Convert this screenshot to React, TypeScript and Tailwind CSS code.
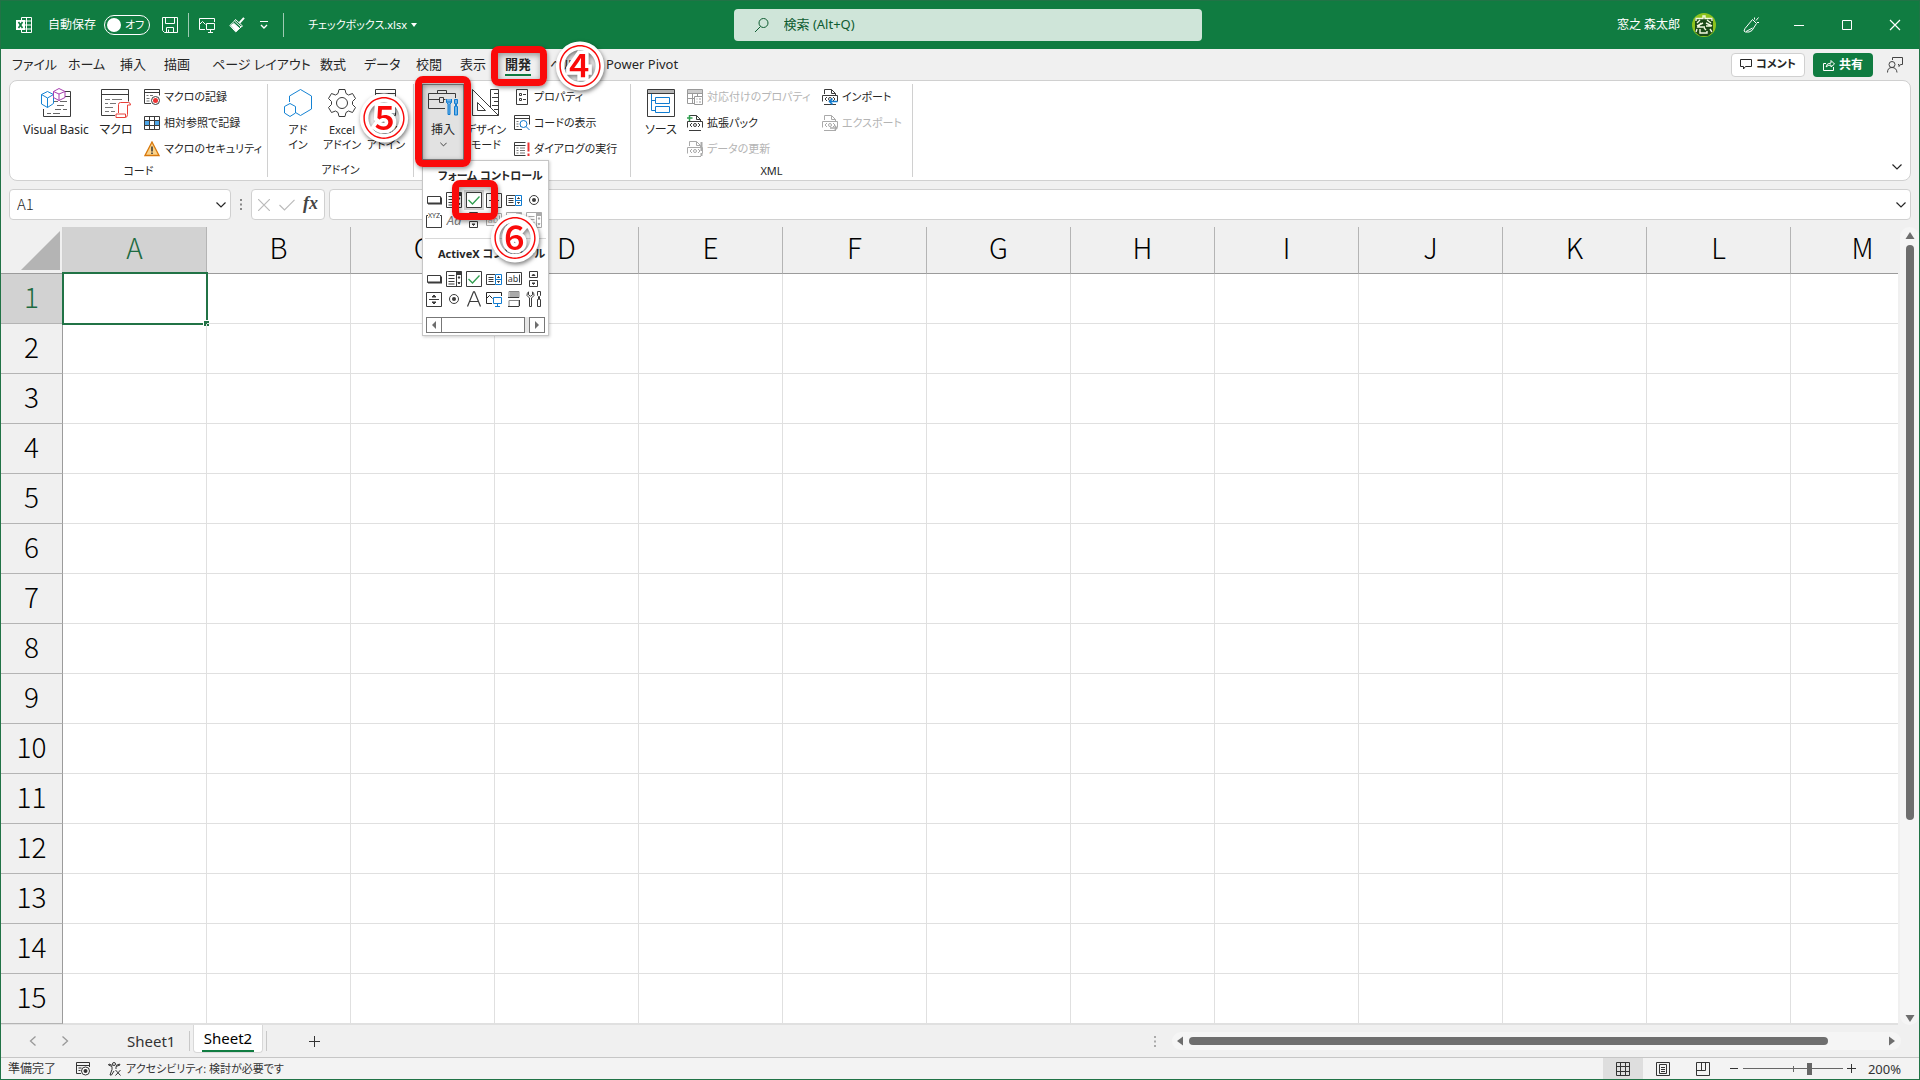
import type { ReactNode } from 'react';

const COLUMNS = ['A', 'B', 'C', 'D', 'E', 'F', 'G', 'H', 'I', 'J', 'K', 'L', 'M'];
const ROWS = Array.from({ length: 15 }, (_, i) => i + 1);

const DARK = '#3b3b3b';
const BLUE = '#0f7bd0';

interface SvgProps {
  w?: number;
  h?: number;
  color?: string;
  children: ReactNode;
}

function Svg({ w = 16, h = 16, color = 'currentColor', children }: SvgProps) {
  return (
    <svg width={w} height={h} viewBox={`0 0 ${w} ${h}`} fill="none" stroke={color} strokeWidth="1" className="shrink-0" aria-hidden="true">
      {children}
    </svg>
  );
}

/* ---------- title bar icons ---------- */

const ExcelIcon = () => (
  <Svg>
    <path d="M5.5 3V.5h10v15h-10V13M5.5 4h10M5.5 8h10M5.5 12h10M10.5.5v15" />
    <rect x="0" y="3" width="9" height="10" fill="#fff" stroke="none" />
    <path d="M2.5 5l4 6M6.5 5l-4 6" stroke="#107c41" strokeWidth="1.6" />
  </Svg>
);

const SaveIcon = () => (
  <Svg>
    <path d="M.5.5h15v15h-13l-2-2zM3.5.5v6h9v-6M4.5 15.5v-5h7v5M6.5 12.5v3" />
  </Svg>
);

const PictureIcon = ({ screen = 'currentColor' }: { screen?: string }) => (
  <Svg>
    <path d="M6 12.500H.5v-11h15V5M.5 7.500L3.500 4.500l3 3" />
    <path d="M7.500 6.500h8v6h-8zM11.500 12.500v3M9 15.500h5" stroke={screen} />
  </Svg>
);

const BrushIcon = () => (
  <Svg>
    <path d="M15 .8l-4.500 5" strokeWidth="2" />
    <path d="M6.500 2.500l7 6.500-1.500 1L5.500 4zM5.500 4L.8 8.500l6 6.500 5.200-5" />
    <path d="M2 8.500l5 5.500 3-3-5-4.500z" fill="currentColor" />
  </Svg>
);

const PenIcon = () => (
  <Svg>
    <path d="M9.500 2.500l4 4-4.500 7-3 1.500H2.500L1 14l1-2.500zM3 14.500L9.500 11M11.500 2.500V.5M13 3.500l2.500-3M14 5.500h2" />
  </Svg>
);

/* ---------- ribbon icons ---------- */

const VisualBasicIcon = () => (
  <Svg w={30} h={30} color={DARK}>
    <path d="M24 3.500h5.500v25h-27V21M24 8.500h5" />
    <path d="M13 13.500h4M19 13.500h7M16 17.500h7M14 21.500h6M22 21.500h4M6 25.500h4M12 25.500h7" stroke="#666" />
    <path d="M.5 6.500L6.500 3.500l6 3v9l-6 4-6-3.500zM.5 6.500l6 3.500 6-3.500M6.500 10v9.500" stroke="#1583d4" fill="#fff" />
    <path d="M12.500 3.500l5.500-3 6 3v6L18 12.500l-5.500-3zM12.500 3.500L18 6l6-2.500M18 6v6.500" stroke="#a83fb0" fill="#fff" />
  </Svg>
);

const MacroIcon = () => (
  <Svg w={30} h={30} color={DARK}>
    <path d="M14 27.500H.5v-26h27v12M.5 6.500h27" />
    <path d="M4 11.500h5M11 11.500h10M4 15.500h3M9 15.500h6M4 19.500h8M4 23.500h4M10 23.500h4" stroke="#777" />
    <path d="M17.500 25V16.500q0-2 2-2h8q2 0 2 2.500h-3v9.500q0 3-2.500 3h-9v-3.500h9.500v3" stroke="#e8413a" fill="#fff" />
  </Svg>
);

const RecordIcon = () => (
  <Svg color={DARK}>
    <path d="M7 14.500H.5v-14h15v6M.5 3.500h15" />
    <path d="M2.500 6.500h2M6 6.500h3M2.500 9.500h3M2.500 12h3" stroke="#777" />
    <circle cx="11.500" cy="11.500" r="4" fill="#fff" />
    <circle cx="11.500" cy="11.500" r="2.500" fill="#e33" stroke="none" />
  </Svg>
);

const RelativeIcon = () => (
  <Svg color={DARK}>
    <rect x="1" y="5" width="14" height="5" fill="#4da6e8" stroke="none" />
    <rect x="6" y="5" width="4" height="5" fill="#fff" stroke="none" />
    <path d="M.5 1.500h15v13H.5zM.5 5.500h15M.5 10.500h15M5.500 1.500v13M10.500 1.500v13" />
  </Svg>
);

const WarningIcon = () => (
  <Svg>
    <path d="M8 1l7 13.500H1z" fill="#fbd38a" stroke="#d8780c" strokeWidth="1.300" />
    <path d="M8 5.500v5M8 11.500v1.500" stroke="#333" strokeWidth="1.500" />
  </Svg>
);

const AddInIcon = () => (
  <Svg w={30} h={30} color="#1583d4">
    <path d="M17.500 1.500l11 6.500v13l-11 6.500-5-3V20M6.500 14V8l11-6.500" />
    <path d="M7 15.500l5.500 3v6.500L7 28.500l-5.500-3.500v-6.500z" />
  </Svg>
);

const GearIcon = () => (
  <Svg w={30} h={30} color={DARK}>
    <path d="M11 5.500l1-4h6l1 4 2.500 1.500 4-1.500 3 5-3 3v3l3 3-3 5-4-1.500-2.500 1.500-1 4h-6l-1-4-2.500-1.500-4 1.500-3-5 3-3v-3l-3-3 3-5 4 1.500z" />
    <circle cx="15" cy="15" r="5.500" />
  </Svg>
);

const ComIcon = () => (
  <Svg w={30} h={30} color={DARK}>
    <path d="M4.500 27.500v-26h20v26zM4.500 5.500h20M8.500 8.500h3v3h-3zM14 10.500h7M8.500 15.500h3v3h-3zM14 17.500h5" />
    <circle cx="20" cy="22" r="5" fill="#9db8c8" stroke="none" />
  </Svg>
);

const ToolboxIcon = () => (
  <Svg w={30} h={30} color={DARK}>
    <path d="M17 20.500H.5v-15h27V10M9.500 5.500v-3h9v3M.5 11.500h11M11.500 9.500h4v5h-4zM15.500 11.500h2" />
    <path d="M18.500 11v3.500l1.500 1.500v10.500h2V16l1.500-1.500V11M18.500 11v3h5v-3" stroke={BLUE} fill="#6db3e8" />
    <path d="M26.500 11.500h3v4h-1v3h1v8.500h-3v-8.500h1v-3h-1z" stroke={BLUE} fill="#6db3e8" />
  </Svg>
);

const DesignIcon = () => (
  <Svg w={30} h={30} color={DARK}>
    <path d="M1.500 1.500v26h26zM6.500 14.500v8h8z" />
    <path d="M19.500 19V1.500h8v26M23 5.500h4M21 9.500h6M23 13.500h4M21 17.500h6M23 21.500h4" />
  </Svg>
);

const PropertyIcon = () => (
  <Svg color={DARK}>
    <path d="M2.500.5h11v15h-11zM5.500 4.500h2v2h-2zM5.500 9.500h2v2h-2zM9 5.500h3M9 10.500h3" />
  </Svg>
);

const ViewCodeIcon = () => (
  <Svg color={DARK}>
    <path d="M8 14.500H.5v-14h15v9M.5 3.500h15" />
    <path d="M2.500 6.500h2M2.500 9h2M2.500 11.500h2M6 11.500h1" stroke="#777" />
    <circle cx="9.500" cy="9" r="3.500" stroke={BLUE} fill="#fff" />
    <path d="M12 11.500l3.500 3.500" stroke={BLUE} />
  </Svg>
);

const RunDialogIcon = () => (
  <Svg color={DARK}>
    <path d="M11.500 14.500H.5v-13h11M.5 4.500h11" />
    <path d="M2.500 7h2M6 7h5M2.500 9.500h2M6 9.500h5M2.500 12h2M6 12h5" stroke="#777" />
    <path d="M14.500 1.500v9M14.500 12.500v2.500" stroke="#e33" strokeWidth="2" />
  </Svg>
);

const SourceIcon = () => (
  <Svg w={30} h={30} color={DARK}>
    <rect x="1" y="2" width="27" height="4" fill="#b5b5b5" stroke="none" />
    <path d="M1.500 1.500h27v27h-27zM1.500 5.500h27" />
    <path d="M5.500 6v16.500h4M5.500 12.500h4M9.500 9.500h14v6h-14zM9.500 18.500h14v6h-14z" stroke={BLUE} />
  </Svg>
);

const MapPropertyIcon = () => (
  <Svg color="#999">
    <rect x="0" y="1" width="15" height="3" fill="#ccc" stroke="none" />
    <path d="M7 14.500H.5V.5h15v7M.5 4.500h15M.5 9.500H7M5.500 4.500v10M10.500 4.500V7" />
    <path d="M7.500 7.500h8v8h-8zM9.500 10h1M12 10h2M9.500 13h1M12 13h2" />
  </Svg>
);

interface XmlFileIconProps {
  color?: string;
  children?: ReactNode;
}

/* page with a <o> mark, the corner mark differs per command */
const XmlFileIcon = ({ color = DARK, children }: XmlFileIconProps) => (
  <Svg color={color}>
    <path d="M2.500 5V.5h7l4 4V6M9.500.5v4h4M2 15.500h12M.5 12.500v-6h15v6" />
    <path d="M5 8l-2 2 2 2M11 8l2 2-2 2" />
    <circle cx="8" cy="10" r="1.500" />
    {children}
  </Svg>
);

/* ---------- small form control icons ---------- */

const ButtonGlyph = () => (
  <Svg color={DARK}>
    <path d="M1.500 4.500h13v7h-13z" />
    <path d="M2 11.500h13v-6" strokeWidth="2" />
  </Svg>
);

const ComboGlyph = ({ color = DARK }: { color?: string }) => (
  <Svg color={color}>
    <path d="M.5.5h15v15H.5zM10.500.5v15M10.500 3.500h5M2.500 4.500h6M2.500 7.500h6M2.500 10.500h6M2.500 13h6" />
    <path d="M10.500 1h5v2.500h-5z" fill={color} />
    <path d="M12 7l1-1.500L14 7zM12 11.500l1 1.500 1-1.500z" fill={color} />
  </Svg>
);

const CheckGlyph = () => (
  <Svg color={DARK}>
    <path d="M.5.5h15v15H.5z" fill="#fff" />
    <path d="M2.500 8l4 4 7-7.500" stroke="#2f9e4f" strokeWidth="1.300" />
  </Svg>
);

const SpinGlyph = () => (
  <Svg color={DARK}>
    <path d="M.5 1.500h15v14H.5zM3 8.500h10" />
    <path d="M6 6l2-2 2 2zM6 11l2 2 2-2z" fill={DARK} />
  </Svg>
);

const ListGlyph = () => (
  <Svg color={DARK}>
    <path d="M9 13.500H.5v-10H9M2.500 6.500h5M2.500 8.500h5M2.500 10.500h5" />
    <path d="M9.500 3.500h6v10h-6zM9.500 8.500h6" stroke={BLUE} />
    <path d="M11.500 6.500l1-1 1 1zM11.500 10.500l1 1 1-1z" fill={DARK} />
  </Svg>
);

const RadioGlyph = () => (
  <Svg color={DARK}>
    <circle cx="8" cy="8" r="4.500" />
    <circle cx="8" cy="8" r="2" fill={DARK} stroke="none" />
  </Svg>
);

const GroupGlyph = () => (
  <Svg color={DARK}>
    <path d="M2 3.500H.5v12h15v-12H14" />
    <text x="8" y="6" fontSize="7" textAnchor="middle" fill={DARK} stroke="none">XYZ</text>
  </Svg>
);

const LabelGlyph = () => (
  <Svg color="#777">
    <text x="8" y="13" fontSize="13" fontStyle="italic" textAnchor="middle" fill="#777" stroke="none">Aa</text>
  </Svg>
);

const ScrollGlyph = () => (
  <Svg color={DARK}>
    <path d="M3.500.5h8v6h-8zM3.500 9.500h8v6h-8z" />
    <path d="M6 4.500L7.500 3 9 4.500zM6 12l1.500 1.500L9 12z" fill={DARK} />
  </Svg>
);

const TextGlyph = ({ color = DARK }: { color?: string }) => (
  <Svg color={color}>
    <path d="M.5 1.500h15v12H.5zM13.500 3.500v8" />
    <text x="7" y="11" fontSize="9" textAnchor="middle" fill={color} stroke="none">ab</text>
  </Svg>
);

const BigLabelGlyph = () => (
  <Svg color={DARK}>
    <path d="M1.500 15.500L7.500.8h1l6 14.700M3.500 10.500h9" strokeWidth="1.200" />
  </Svg>
);

const ToggleGlyph = () => (
  <Svg color={DARK}>
    <path d="M3 .5h10v6H3zM3 9.500h10v6H3z" stroke="#888" />
    <path d="M4 1h9v5H4z" fill="#aaa" stroke="none" />
    <path d="M2 6.500h11M2 15.500h11M13.500 9v6" />
  </Svg>
);

const ToolsGlyph = () => (
  <Svg color={DARK}>
    <path d="M2.500.8v3l2 1.500 2-1.500v-3M2.500.8Q.8 2.500 1 4.500L3.500 7v8.500h2V7L8 4.500Q8 2 6.500.8" />
    <path d="M11.500.5h3v4l-1 1v3h1v7h-3v-7h1v-3l-1-1z" />
  </Svg>
);

const FORM_CONTROLS = [
  { name: 'ボタン', icon: <ButtonGlyph /> },
  { name: 'コンボ ボックス', icon: <ComboGlyph /> },
  { name: 'チェック ボックス', icon: <CheckGlyph />, marked: true },
  { name: 'スピン ボタン', icon: <SpinGlyph /> },
  { name: 'リスト ボックス', icon: <ListGlyph /> },
  { name: 'オプション ボタン', icon: <RadioGlyph /> },
  { name: 'グループ ボックス', icon: <GroupGlyph /> },
  { name: 'ラベル', icon: <LabelGlyph /> },
  { name: 'スクロール バー', icon: <ScrollGlyph /> },
  { name: 'テキスト フィールド', icon: <TextGlyph color="#aaa" /> },
  { name: 'コンボ リスト', icon: <ComboGlyph color="#aaa" /> },
  { name: 'コンボ ドロップダウン', icon: <ComboGlyph color="#aaa" /> },
];

const ACTIVEX_CONTROLS = [
  { name: 'コマンド ボタン', icon: <ButtonGlyph /> },
  { name: 'コンボ ボックス', icon: <ComboGlyph /> },
  { name: 'チェック ボックス', icon: <CheckGlyph /> },
  { name: 'リスト ボックス', icon: <ListGlyph /> },
  { name: 'テキスト ボックス', icon: <TextGlyph /> },
  { name: 'スクロール バー', icon: <ScrollGlyph /> },
  { name: 'スピン ボタン', icon: <SpinGlyph /> },
  { name: 'オプション ボタン', icon: <RadioGlyph /> },
  { name: 'ラベル', icon: <BigLabelGlyph /> },
  { name: 'イメージ', icon: <PictureIcon screen={BLUE} /> },
  { name: 'トグル ボタン', icon: <ToggleGlyph /> },
  { name: 'コントロールの選択', icon: <ToolsGlyph /> },
];

const TABS = [
  { label: 'ファイル', width: 'w-14' },
  { label: 'ホーム', width: 'w-13' },
  { label: '挿入', width: 'w-11' },
  { label: '描画', width: 'w-12' },
  { label: 'ページ レイアウト', width: 'w-27' },
  { label: '数式', width: 'w-11' },
  { label: 'データ', width: 'w-13' },
  { label: '校閲', width: 'w-11' },
  { label: '表示', width: 'w-[45px]' },
  { label: '開発', width: 'w-[45px]', active: true },
  { label: 'ヘルプ', width: 'w-14' },
  { label: 'Power Pivot', width: 'w-20' },
];

function Chevron({ w = 10 }: { w?: number }) {
  return (
    <svg width={w} height={w} viewBox="0 0 10 10" fill="none" stroke="currentColor" strokeWidth="1.200" className="shrink-0" aria-hidden="true">
      <path d="M.5 2.500L5 7l4.500-4.500" />
    </svg>
  );
}

function Triangle({ d }: { d: string }) {
  return (
    <svg width="10" height="10" viewBox="0 0 10 10" fill="#6e6e6e" className="shrink-0" aria-hidden="true">
      <path d={d} />
    </svg>
  );
}

function StepNumber({ children, place }: { children: string; place: string }) {
  return (
    <span
      className={`pointer-events-none absolute z-30 font-['Noto_Sans_CJK_JP',sans-serif] text-[44px] leading-[44px] font-medium text-[#fa0a0a] [-webkit-text-stroke:7px_white] [paint-order:stroke_fill] drop-shadow-[1px_2px_2px_rgba(0,0,0,0.5)] ${place}`}
    >
      {children}
    </span>
  );
}

function RedFrame({ place }: { place: string }) {
  return (
    <span
      className={`pointer-events-none absolute z-20 rounded-lg border-[7px] border-[#fa0a0a] shadow-[1px_2px_4px_rgba(0,0,0,0.4),inset_1px_2px_6px_rgba(0,0,0,0.4)] ${place}`}
    />
  );
}

interface BigButtonProps {
  icon: ReactNode;
  lines: string[];
  width?: string;
  size?: string;
}

function BigButton({ icon, lines, width = 'w-11', size = 'text-xs' }: BigButtonProps) {
  return (
    <button className="flex h-19 shrink-0 flex-col items-center gap-1 pt-1 whitespace-nowrap">
      {icon}
      <span className={`flex flex-col items-center ${width} ${size}`}>
        {lines.map((line) => (
          <span key={line} className="leading-[15px]">{line}</span>
        ))}
      </span>
    </button>
  );
}

function SmallButton({ icon, label, disabled }: { icon: ReactNode; label: string; disabled?: boolean }) {
  return (
    <button disabled={disabled} className="flex h-[26px] items-center gap-1 text-left text-[11px] leading-4 whitespace-nowrap disabled:text-[#b4b4b4]">
      {icon}
      {label}
    </button>
  );
}

function Group({ label, width, children }: { label: string; width: string; children: ReactNode }) {
  return (
    <section className={`my-[3px] flex shrink-0 flex-col border-r border-[#d0d0d0] ${width}`}>
      <div className="flex h-[78px] pl-2">{children}</div>
      <h2 className="mt-0.5 text-center text-[11px] leading-[14px]">{label}</h2>
    </section>
  );
}

function TitleBar() {
  return (
    <header className="flex h-12 shrink-0 items-center bg-[#107c41] text-xs text-white">
      <div className="flex flex-1 items-center pl-[15px] whitespace-nowrap">
        <ExcelIcon />
        <label className="ml-4 flex items-center gap-2">
          自動保存
          <input type="checkbox" className="peer sr-only" />
          <span className="flex h-5 w-[46px] items-center gap-1 rounded-full border border-white pl-0.5 text-[11px]">
            <span className="size-[14px] rounded-full bg-white" />
            オフ
          </span>
        </label>
        <button aria-label="上書き保存" className="ml-3"><SaveIcon /></button>
        <span className="ml-[10px] h-6 w-px bg-white/60" />
        <button aria-label="画面" className="ml-[10px]"><PictureIcon /></button>
        <button aria-label="書式のコピー" className="ml-[14px]"><BrushIcon /></button>
        <button aria-label="クイック アクセス ツール バーのカスタマイズ" className="ml-[14px]">
          <Svg w={10} h={10}>
            <path d="M1 1.500h8" />
            <path d="M2 5l3 3 3-3" strokeWidth="1.400" />
          </Svg>
        </button>
        <span className="ml-[14px] h-6 w-px bg-white/60" />
        <button className="ml-6 flex items-center gap-1 text-[11px]">
          チェックボックス.xlsx
          <svg width="6" height="4" viewBox="0 0 6 4" fill="#fff" aria-hidden="true"><path d="M0 0h6L3 4z" /></svg>
        </button>
      </div>
      <label className="ml-4 flex h-8 w-[468px] shrink items-center gap-3.5 rounded bg-[#cfe5d9] px-5 text-[#0e5c31]">
        <Svg w={16} h={16}>
          <circle cx="9.500" cy="6" r="4.500" />
          <path d="M6.500 9.500L1 15" />
        </Svg>
        <input aria-label="検索" placeholder="検索 (Alt+Q)" className="w-full bg-transparent text-[13px] outline-none placeholder:text-[#0e5c31]" />
      </label>
      <div className="flex flex-1 items-center justify-end pr-4 whitespace-nowrap">
        <span>窓之 森太郎</span>
        <svg width="24" height="24" viewBox="0 0 24 24" className="ml-3" aria-hidden="true">
          <circle cx="12" cy="12" r="12" fill="#8cc21c" />
          <path d="M3 5h18v14l-5 4H8l-5-4z" fill="#1d4a18" />
          <path d="M4 8V5.500h7V3h2v2.500h7V8M8 7l-3 3M15 7l4 3M5 13l6-3M9 10l-3 4h7M14 10l6 3M14 13h5M5 16l-1 3M8 16v4h7v-2M12 15l2 2M18 16l2 3" fill="none" stroke="#f3f9e0" strokeWidth="1.400" />
        </svg>
        <button aria-label="ペン" className="ml-[27px]"><PenIcon /></button>
        <button aria-label="最小化" className="ml-8"><Svg><path d="M3 8.500h10" /></Svg></button>
        <button aria-label="最大化" className="ml-8"><Svg><path d="M3.500 3.500h9v9h-9z" /></Svg></button>
        <button aria-label="閉じる" className="ml-8"><Svg><path d="M3 3l10 10M13 3L3 13" strokeWidth="1.200" /></Svg></button>
      </div>
    </header>
  );
}

function TabRow() {
  return (
    <nav className="flex h-[31px] shrink-0 items-center justify-between pr-4 pl-[11px] text-[13px] leading-5">
      <div className="flex pt-px" role="tablist">
        {TABS.map((tab) => (
          <div key={tab.label} className={`relative shrink-0 whitespace-nowrap ${tab.width}`}>
            <button
              role="tab"
              aria-selected={!!tab.active}
              className={tab.active ? 'border-b-2 border-[#107c41] font-bold' : 'border-b-2 border-transparent'}
            >
              {tab.label}
            </button>
            {tab.active && <RedFrame place="-left-3.5 -top-2 h-10 w-14" />}
            {tab.active && <StepNumber place="left-[53px] -top-3">④</StepNumber>}
          </div>
        ))}
      </div>
      <div className="flex items-center gap-2 text-xs font-bold">
        <button className="flex h-6 w-[74px] items-center justify-center gap-1 rounded border border-[#d0d0d0] bg-white text-[11px] whitespace-nowrap">
          <Svg w={12} h={12}><path d="M.5.5h11v7h-6L3.500 10V7.500h-3z" /></Svg>
          コメント
        </button>
        <button className="flex h-6 w-[60px] items-center justify-center gap-1 rounded bg-[#107c41] whitespace-nowrap text-white">
          <Svg w={12} h={12}><path d="M3 4.500H.5v7h10V8M3 8q.5-4 5-4V1.500l3.500 3.500L8 8V6Q5 6 3 8z" /></Svg>
          共有
        </button>
        <button aria-label="アカウント" className="ml-1.5 text-[#444]">
          <Svg>
            <path d="M5.500.5h10v7h-2l-1.500 2v-2h-1M5.500.5V3" />
            <circle cx="5" cy="7.500" r="3" />
            <path d="M.5 15.500q0-5 4.500-5t5 5" />
          </Svg>
        </button>
      </div>
    </nav>
  );
}

interface Control {
  name: string;
  icon: ReactNode;
  marked?: boolean;
}

function ControlGrid({ items }: { items: Control[] }) {
  return (
    <div className="grid auto-rows-[20px] grid-cols-[repeat(6,20px)] px-px">
      {items.map((item) => (
        <button
          key={item.name}
          aria-label={item.name}
          className={`relative flex items-center justify-center ${item.marked ? 'bg-[#d4d4d4]' : ''}`}
        >
          {item.icon}
          {item.marked && <RedFrame place="-left-3 -top-2.5 h-10 w-[46px]" />}
          {item.marked && <StepNumber place="left-[29px] top-[24px]">⑥</StepNumber>}
        </button>
      ))}
    </div>
  );
}

function InsertMenu() {
  return (
    <div className="absolute top-19 left-0 z-10 w-[127px] border border-[#c6c6c6] bg-white pb-0.5 shadow-[1px_1px_3px_rgba(0,0,0,0.2)]">
      <h3 className="pl-[15px] text-[11px] leading-[29px] font-bold whitespace-nowrap">フォーム コントロール</h3>
      <ControlGrid items={FORM_CONTROLS} />
      <hr className="mx-0.5 mt-2 border-[#d8d8d8]" />
      <h3 className="pl-[15px] text-[11px] leading-[30px] font-bold whitespace-nowrap">ActiveX コントロール</h3>
      <ControlGrid items={ACTIVEX_CONTROLS} />
      <div className="mx-[3px] mt-2 flex h-4 bg-[#e6e6e6]">
        <button aria-label="左へ" className="flex w-4 items-center justify-center border border-[#777] bg-white"><Triangle d="M7 1v8L3 5z" /></button>
        <span className="-ml-px w-[84px] border border-[#777] bg-white" />
        <button aria-label="右へ" className="ml-auto flex w-4 items-center justify-center border border-[#777] bg-white"><Triangle d="M3 1v8l4-4z" /></button>
      </div>
    </div>
  );
}

function Ribbon() {
  return (
    <div className="relative mx-2 flex h-[101px] shrink-0 rounded-lg border border-[#d0d0d0] bg-white">
      <Group label="コード" width="w-[258px]">
        <BigButton icon={<VisualBasicIcon />} lines={['Visual Basic']} width="w-19" />
        <BigButton icon={<MacroIcon />} lines={['マクロ']} />
        <div className="ml-1.5">
          <SmallButton icon={<RecordIcon />} label="マクロの記録" />
          <SmallButton icon={<RelativeIcon />} label="相対参照で記録" />
          <SmallButton icon={<WarningIcon />} label="マクロのセキュリティ" />
        </div>
      </Group>
      <Group label="アドイン" width="w-[146px]">
        <BigButton icon={<AddInIcon />} lines={['アド', 'イン']} size="text-[11px]" />
        <BigButton icon={<GearIcon />} lines={['Excel', 'アドイン']} size="text-[11px]" />
        <div className="relative">
          <BigButton icon={<ComIcon />} lines={['COM', 'アドイン']} size="text-[11px]" />
          <StepNumber place="-left-0.5 top-2.5">⑤</StepNumber>
        </div>
      </Group>
      <Group label="" width="w-[217px]">
        <div className="relative">
          <button className="flex h-19 w-[42px] flex-col items-center gap-1 border border-[#8a8a8a] bg-[#e2e2e2] pt-[3px] text-xs leading-[15px]">
            <ToolboxIcon />
            挿入
            <Chevron w={7} />
          </button>
          <RedFrame place="-left-[7px] -top-2 h-[91px] w-14" />
          <InsertMenu />
        </div>
        <BigButton icon={<DesignIcon />} lines={['デザイン', 'モード']} size="text-[11px]" />
        <div className="ml-1.5">
          <SmallButton icon={<PropertyIcon />} label="プロパティ" />
          <SmallButton icon={<ViewCodeIcon />} label="コードの表示" />
          <SmallButton icon={<RunDialogIcon />} label="ダイアログの実行" />
        </div>
      </Group>
      <Group label="XML" width="w-[282px]">
        <BigButton icon={<SourceIcon />} lines={['ソース']} />
        <div className="ml-1 w-[135px] shrink-0">
          <SmallButton icon={<MapPropertyIcon />} label="対応付けのプロパティ" disabled />
          <SmallButton icon={<XmlFileIcon><path d="M2.500 0v6M-.5 3h6" stroke="#2f9e4f" strokeWidth="1.500" /></XmlFileIcon>} label="拡張パック" />
          <SmallButton icon={<XmlFileIcon color="#aaa"><path d="M14.500 1v9M14.500 12v3" strokeWidth="2" /></XmlFileIcon>} label="データの更新" disabled />
        </div>
        <div>
          <SmallButton icon={<XmlFileIcon><path d="M15.500 12.500h-8M10.500 9.500l-3 3 3 3" stroke={BLUE} strokeWidth="1.500" /></XmlFileIcon>} label="インポート" />
          <SmallButton icon={<XmlFileIcon color="#aaa"><path d="M8 13h7M12.500 10.500l2.500 2.500-2.500 2.500" strokeWidth="1.300" /></XmlFileIcon>} label="エクスポート" disabled />
        </div>
      </Group>
      <button aria-label="リボンの表示オプション" className="mt-auto mr-2 mb-2 ml-auto"><Chevron /></button>
    </div>
  );
}

function FormulaBar() {
  return (
    <div className="mx-2 mt-2 mb-[7px] flex h-[31px] shrink-0 items-stretch">
      <label className="flex w-[222px] shrink-0 items-center justify-between rounded border border-[#d0d0d0] bg-white pr-1 pl-[7px]">
        <input aria-label="名前ボックス" defaultValue="A1" className="w-40 font-['Noto_Sans_CJK_JP',sans-serif] text-[15px] font-light outline-none" />
        <Chevron />
      </label>
      <span className="flex w-5 items-center justify-center text-[#888]">
        <Svg w={2} h={11}><path d="M1 0v2M1 4.500v2M1 9v2" strokeWidth="2" /></Svg>
      </span>
      <div className="mr-1 flex w-[74px] shrink-0 items-center justify-between rounded border border-[#d0d0d0] bg-white px-1.5 text-[#bbb]">
        <button aria-label="キャンセル"><Svg w={12} h={12}><path d="M0 0l12 12M12 0L0 12" strokeWidth="1.200" /></Svg></button>
        <button aria-label="入力"><Svg w={16} h={12}><path d="M.5 6l5 5L15.500.8" strokeWidth="1.200" /></Svg></button>
        <button className="pb-1 font-['Liberation_Serif',serif] text-lg leading-5 font-bold text-[#444] italic">fx</button>
      </div>
      <label className="flex flex-1 items-center rounded border border-[#d0d0d0] bg-white px-1">
        <input aria-label="数式バー" className="flex-1 outline-none" />
        <Chevron />
      </label>
    </div>
  );
}

function Sheet() {
  return (
    <div className="flex min-h-0 flex-1">
      <div className="min-w-0 flex-1 overflow-hidden border-b border-[#e0e0e0]">
        <table className="w-[1934px] table-fixed border-separate border-spacing-0 bg-white font-['Noto_Sans_CJK_JP',sans-serif] text-[28px] leading-8 font-light">
          <thead>
            <tr className="h-[47px]">
              <th className="w-[62px] border-r border-b border-r-[#d0d0d0] border-b-[#9b9b9b] bg-[#f0f0f0] p-0 pr-0.5">
                <svg width="39" height="39" viewBox="0 0 39 39" className="ml-auto" aria-hidden="true">
                  <path d="M39 0v39H0z" fill="#b4b4b4" />
                </svg>
              </th>
              {COLUMNS.map((col) => (
                <th
                  key={col}
                  scope="col"
                  className={`w-36 border-r border-b border-r-[#b4b4b4] border-b-[#9b9b9b] p-0 pb-1.5 font-light ${col === 'A' ? 'bg-[#d2d2d2] text-[#1e6b41]' : 'bg-[#f0f0f0] text-black'}`}
                >
                  {col}
                </th>
              ))}
            </tr>
          </thead>
          <tbody>
            {ROWS.map((row) => (
              <tr key={row} className="h-[50px]">
                <th
                  scope="row"
                  className={`border-r border-b border-r-[#9b9b9b] border-b-[#b4b4b4] p-0 pb-1.5 font-light ${row === 1 ? 'bg-[#d2d2d2] text-[#1e6b41]' : 'bg-[#f0f0f0] text-black'}`}
                >
                  {row}
                </th>
                {COLUMNS.map((col) => (
                  <td key={col} className="relative border-r border-b border-[#e0e0e0] p-0">
                    {row === 1 && col === 'A' && (
                      <span className="absolute -top-0.5 -right-0.5 -bottom-0.5 -left-px border-2 border-[#217346]">
                        <span className="absolute -right-1 -bottom-1 size-[7px] border border-white bg-[#217346]" />
                      </span>
                    )}
                  </td>
                ))}
              </tr>
            ))}
          </tbody>
        </table>
      </div>
      <div className="ml-0.5 flex w-[19px] shrink-0 flex-col items-center gap-1 rounded-full bg-[#f5f5f5] pt-1">
        <Triangle d="M5 1l4.500 7h-9z" />
        <div className="flex w-2 flex-1 flex-col">
          <span className="h-3/4 rounded-full bg-[#6e6e6e]" />
        </div>
        <Triangle d="M.5 0h9L5 7z" />
      </div>
    </div>
  );
}

function SheetTabs() {
  return (
    <div className="flex h-8 shrink-0 items-center text-[15px] text-[#333]">
      <button aria-label="前のシート" className="ml-7 text-[#999]"><Svg w={8} h={10}><path d="M6.500.5L1.500 5l5 4.500" strokeWidth="1.300" /></Svg></button>
      <button aria-label="次のシート" className="ml-6 text-[#999]"><Svg w={8} h={10}><path d="M1.500.5l5 4.500-5 4.500" strokeWidth="1.300" /></Svg></button>
      <button className="ml-[58px] h-5 w-[63px] border-r border-[#c8c8c8] text-left leading-5">Sheet1</button>
      <button className="ml-[3px] h-7 w-[70px] self-start rounded-b border border-t-0 border-[#d8d8d8] bg-white px-2 leading-6">
        <span className="block border-b-2 border-[#107c41] text-black">Sheet2</span>
      </button>
      <span className="ml-[3px] h-5 w-px bg-[#c8c8c8]" />
      <button aria-label="新しいシート" className="ml-[42px]"><Svg w={11} h={11}><path d="M0 5.500h11M5.500 0v11" /></Svg></button>
      <span className="ml-auto text-[#aaa]"><Svg w={2} h={11}><path d="M1 0v2M1 4.500v2M1 9v2" strokeWidth="2" /></Svg></span>
      <div className="mr-[18px] ml-4 flex h-[18px] w-[38%] items-center gap-1 rounded-full bg-[#f5f5f5] px-[3px]">
        <Triangle d="M8 .5v9L2 5z" />
        <div className="flex h-2 flex-1">
          <span className="w-[92%] rounded-full bg-[#6e6e6e]" />
        </div>
        <Triangle d="M1 .5v9L7 5z" />
      </div>
    </div>
  );
}

function StatusBar() {
  return (
    <footer className="flex h-[22px] shrink-0 items-center border-t border-[#c6c6c6] bg-[#f3f3f3] text-xs leading-4 whitespace-nowrap text-[#333]">
      <span className="ml-[7px]">準備完了</span>
      <button aria-label="マクロの記録" className="ml-5">
        <Svg w={14} h={14}>
          <path d="M5 11.500H.5V.5h13V5M.5 3.500h13M2.500 6h3M2.500 8.500h2" />
          <circle cx="9.500" cy="9" r="4" fill="#fff" />
          <circle cx="9.500" cy="9" r="2" fill="#333" stroke="none" />
        </Svg>
      </button>
      <button className="ml-[18px] flex items-center gap-1 text-[11px]">
        <Svg w={14} h={14}>
          <circle cx="6" cy="2" r="1.500" />
          <path d="M.5 3L4 4.500v3L2 13h1.500L6 9M12 3L8 4.500V7M.5 3l.5-1 3.500 1.500M12 3l-.5-1L8 3.500M7.500 8l5 5.500M12.500 8l-5 5.500" />
        </Svg>
        アクセシビリティ: 検討が必要です
      </button>
      <div className="ml-auto flex h-full items-center">
        <button aria-label="標準" className="flex h-full w-10 items-center justify-center bg-[#dedede]">
          <Svg w={14} h={14}><path d="M.5.5h13v13H.5zM.5 4.500h13M.5 9.500h13M4.500.5v13M9.500.5v13" /></Svg>
        </button>
        <button aria-label="ページ レイアウト" className="flex h-full w-10 items-center justify-center">
          <Svg w={14} h={14}><path d="M.5.5h13v13H.5zM3.500 2.500h7v9h-7zM5 5.500h4M5 7.500h4M5 9.500h4" /></Svg>
        </button>
        <button aria-label="改ページ プレビュー" className="flex h-full w-10 items-center justify-center">
          <Svg w={14} h={14}><path d="M.5.5h13v13H.5zM.5 8.500h9V.5M5.500.5v8" /></Svg>
        </button>
        <button aria-label="縮小" className="ml-[7px]"><Svg w={9} h={9}><path d="M0 4.500h8" /></Svg></button>
        <div className="relative mx-1 flex w-[100px] items-center">
          <span className="absolute left-1/2 h-1.5 w-px bg-[#666]" />
          <input
            type="range"
            aria-label="ズーム"
            min={0}
            max={100}
            defaultValue={67}
            className="h-3 w-full appearance-none bg-transparent bg-[linear-gradient(#666,#666)] bg-[length:100%_1px] bg-center bg-no-repeat [&::-webkit-slider-thumb]:h-3 [&::-webkit-slider-thumb]:w-[5px] [&::-webkit-slider-thumb]:appearance-none [&::-webkit-slider-thumb]:bg-[#666]"
          />
        </div>
        <button aria-label="拡大"><Svg w={9} h={9}><path d="M0 4.500h9M4.500 0v9" /></Svg></button>
        <span className="mr-[18px] ml-3 text-[13px]">200%</span>
      </div>
    </footer>
  );
}

export default function App() {
  return (
    <div className="flex h-screen flex-col overflow-hidden border border-[#217346] bg-[#f0f0f0] font-['Noto_Sans','Noto_Sans_CJK_JP',sans-serif] text-[#262626] [font-feature-settings:'palt']">
      <TitleBar />
      <TabRow />
      <Ribbon />
      <FormulaBar />
      <Sheet />
      <SheetTabs />
      <StatusBar />
    </div>
  );
}
